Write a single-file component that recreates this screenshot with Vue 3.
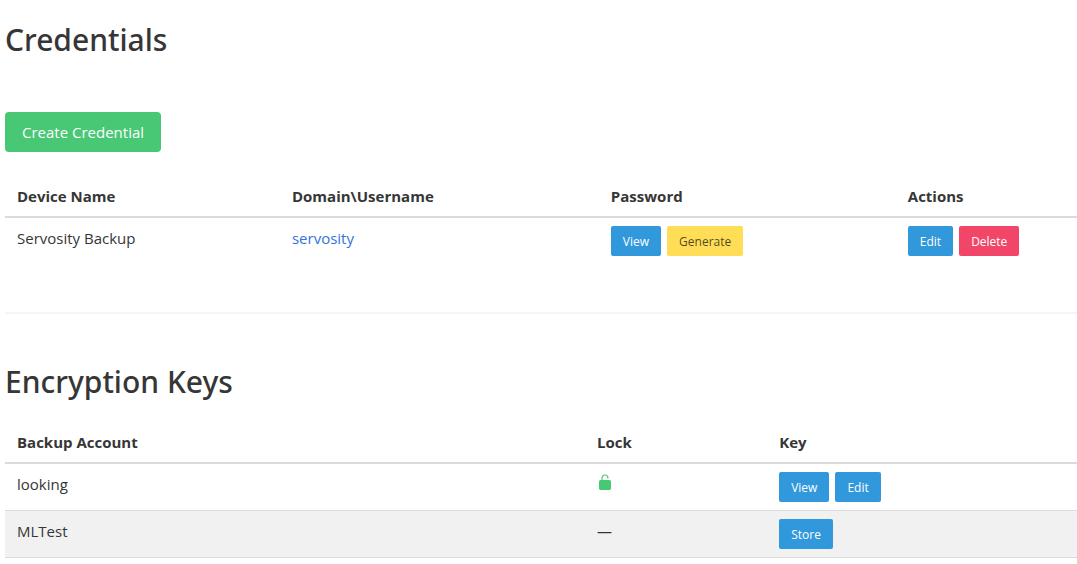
<script setup>
const credentials = [{ device: 'Servosity Backup', username: 'servosity' }]
const keys = [
  { account: 'looking', unlocked: true, actions: ['View', 'Edit'] },
  { account: 'MLTest', unlocked: false, actions: ['Store'] },
]
</script>

<template>
  <main class="page">
    <section>
      <h1 class="title">Credentials</h1>
      <button type="button" class="button success">Create Credential</button>
      <table class="table credentials">
        <colgroup>
          <col class="device" />
          <col class="user" />
          <col class="password" />
          <col />
        </colgroup>
        <thead>
          <tr>
            <th scope="col">Device Name</th>
            <th scope="col">Domain\Username</th>
            <th scope="col">Password</th>
            <th scope="col">Actions</th>
          </tr>
        </thead>
        <tbody>
          <tr v-for="item in credentials" :key="item.device">
            <td>{{ item.device }}</td>
            <td><a href="#">{{ item.username }}</a></td>
            <td>
              <div class="buttons">
                <button type="button" class="button small info">View</button>
                <button type="button" class="button small warning">Generate</button>
              </div>
            </td>
            <td>
              <div class="buttons">
                <button type="button" class="button small info">Edit</button>
                <button type="button" class="button small danger">Delete</button>
              </div>
            </td>
          </tr>
        </tbody>
      </table>
    </section>
    <hr class="divider" />
    <section>
      <h2 class="title">Encryption Keys</h2>
      <table class="table keys">
        <colgroup>
          <col class="account" />
          <col class="lock" />
          <col />
        </colgroup>
        <thead>
          <tr>
            <th scope="col">Backup Account</th>
            <th scope="col">Lock</th>
            <th scope="col">Key</th>
          </tr>
        </thead>
        <tbody>
          <tr v-for="item in keys" :key="item.account">
            <td>{{ item.account }}</td>
            <td>
              <svg v-if="item.unlocked" class="lock-icon" viewBox="0 0 16 16" role="img" aria-label="Unlocked">
                <path d="M5 7V4C5 2.200 6.200 1 8 1s2.900 1.200 2.900 2.900" fill="none" stroke="currentColor" stroke-width="1.200" stroke-linecap="round" />
                <rect x="2" y="6" width="12" height="10" rx="1.700" fill="currentColor" />
              </svg>
              <template v-else>—</template>
            </td>
            <td>
              <div class="buttons">
                <button v-for="action in item.actions" :key="action" type="button" class="button small info">{{ action }}</button>
              </div>
            </td>
          </tr>
        </tbody>
      </table>
    </section>
  </main>
</template>

<style>
body {
  margin: 0;
  background: #fff;
}
</style>

<style scoped>
.page {
  padding: 22px 0 0 5px;
  color: #363636;
  font-family: "Segoe UI", "Open Sans", "Noto Sans", sans-serif;
  font-size: 15px;
  font-weight: 400;
  line-height: 24px;
}
.title {
  margin: 0;
  font-family: "Segoe UI", "Noto Sans", "Open Sans", sans-serif;
  font-size: 30px;
  font-weight: 500;
  line-height: 36px;
}
.button {
  box-sizing: border-box;
  height: 40px;
  padding: 0 17px;
  border: 0;
  border-radius: 4px;
  font-family: inherit;
  font-size: 15px;
  font-weight: 400;
  line-height: 24px;
  white-space: nowrap;
  cursor: pointer;
}
h1 + .button {
  margin: 54px 0 24px;
  display: block;
}
.small {
  height: 30px;
  padding: 2px 12px 0;
  border-radius: 2px;
  font-size: 12px;
  line-height: 18px;
}
.success { background: #48c774; color: #fff; }
.info { background: #3298dc; color: #fff; }
.warning { background: #ffdd57; color: rgba(0, 0, 0, 0.7); }
.danger { background: #f14668; color: #fff; }
.buttons {
  display: flex;
  gap: 6px;
}
.table {
  width: 100%;
  table-layout: fixed;
  border-collapse: separate;
  border-spacing: 0;
}
th,
td {
  padding: 8px 12px;
  text-align: left;
  vertical-align: top;
}
th {
  border-bottom: 2px solid #dbdbdb;
  font-weight: 700;
}
.device { width: 25.65%; }
.user { width: 29.75%; }
.password { width: 27.7%; }
.account { width: 54.1%; }
.lock { width: 17%; }
a {
  color: #3273dc;
  text-decoration: none;
}
.divider {
  height: 2px;
  margin: 48px 0 50px;
  border: 0;
  background: #f5f5f5;
}
.keys {
  margin-top: 22px;
}
.keys td {
  border-bottom: 1px solid #dbdbdb;
}
.keys tbody tr:nth-child(even) {
  background: #f1f1f1;
}
.lock-icon {
  display: block;
  width: 16px;
  height: 16px;
  margin-top: 2px;
  color: #48c774;
}
</style>
